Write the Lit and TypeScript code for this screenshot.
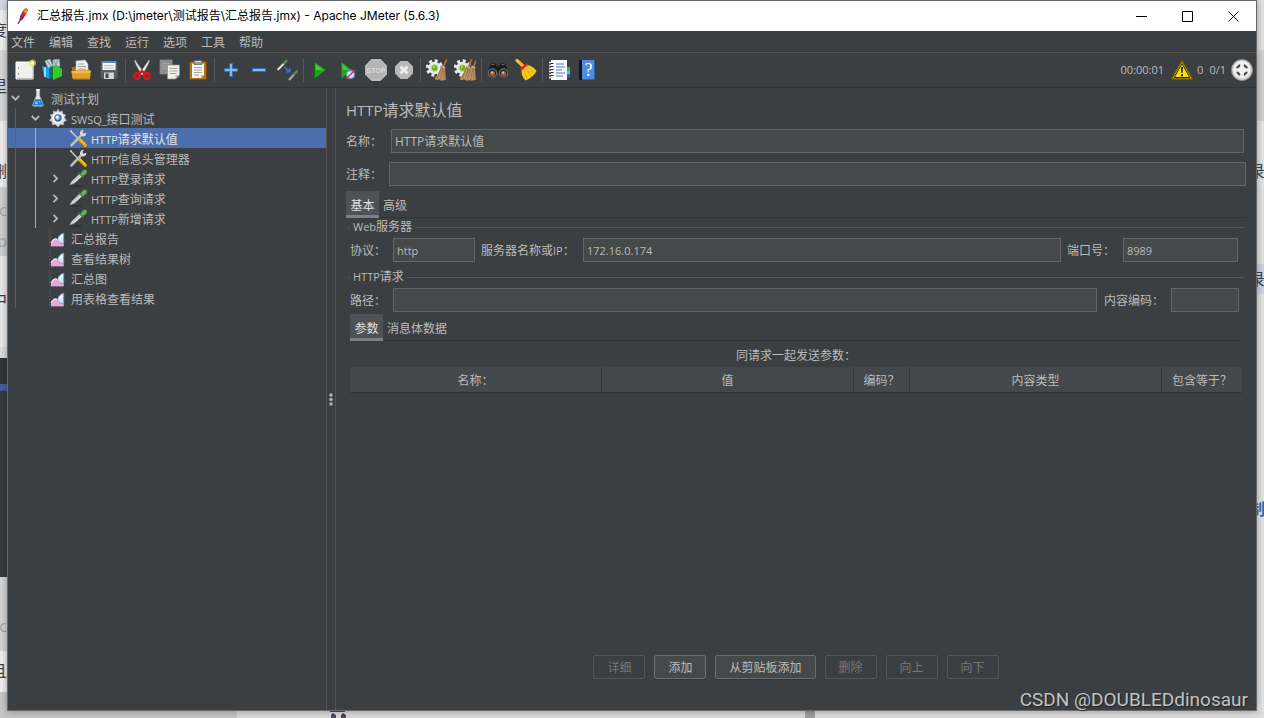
import { LitElement, html, css, svg, nothing } from "lit";
import { customElement, property, state } from "lit/decorators.js";
import { classMap } from "lit/directives/class-map.js";

const CJK = css`"Open Sans", "Noto Sans", "Noto Sans CJK SC", sans-serif`;

const STAR = "M11 0l2 3.400 3.600-1.300.4 3.800 3.600 1.200-1.700 3.400L21.500 14l-3.300 1.700-.2 3.900-3.800-.6L11 22l-3.200-3-3.800.6-.2-3.900L.5 14l2.600-3.500L1.400 7.100 5 5.900l.4-3.800L9 3.400z";

/* A document sheet that the copy icon draws twice. */
const sheet = (x: number, y: number, fill: string) => svg`
  <path d="M${x} ${y}h12v10l-4 4h-8z" fill=${fill} stroke="#8d8d8d" stroke-width=".7"/>
  <path d="M${x + 12} ${y + 10}h-4v4z" fill="#bdbdb8"/>
  <path d="M${x + 2} ${y + 3.5}h8M${x + 2} ${y + 6}h8M${x + 2} ${y + 8.5}h7" stroke="#a4a4a0" stroke-width="1"/>`;

const broom = (dx: number) => svg`
  <g transform="translate(${dx} 0)">
    <path d="M20 0l1.500.5-3.500 8-1.500-.8z" fill="#a8703c"/>
    <path d="M15.500 7l3.500 1.500.8 12.500-4.800.8-2-1.800-1.500 1.300-3-1.300c3-4 5-8 7-13z" fill="#bd9468"/>
    <path d="M15.500 8.500L11 20M17 9l-2.500 12M18 9v12" stroke="#8d6540" stroke-width=".7" fill="none"/>
    <path d="M15.500 7l3.800 1.800" stroke="#d8b78a" stroke-width="1.200"/>
  </g>`;

const gearWhite = svg`
  <circle cx="8.500" cy="9" r="6.200" fill="#ececec"/>
  <circle cx="8.500" cy="9" r="7.200" fill="none" stroke="#ececec" stroke-width="3" stroke-dasharray="3 2.650"/>
  <circle cx="8.500" cy="9" r="4" fill="#c9d6b8"/>
  <circle cx="8.500" cy="9" r="2.800" fill="#63b315"/>
  <circle cx="7.800" cy="8.200" r="1" fill="#b6e878"/>`;

const ICONS: Record<string, unknown> = {
  feather: svg`
    <path d="M16.500 1.500c2.500 1 1.500 4-1 8-1.500 2.500-4 6-6 7.500l-1.500-1c.5-3.500 2-8 4-11 1.500-2.300 3-3.800 4.500-3.500z" fill="#c4243c"/>
    <path d="M16.500 1.500c2.500 1 1.500 4 0 6.500l-4-1.500c1-2.500 2.500-5 4-5z" fill="#f08a24"/>
    <path d="M9.500 10l4 2.200c-1.200 2-2.800 4-4 4.800l-1.500-1c.2-2 .7-4 1.500-6z" fill="#8d2464"/>
    <path d="M8.500 16.500L6 20.500" stroke="#5a2050" stroke-width="1.500"/>`,
  newfile: svg`
    <path d="M2 3h17v17H2z" fill="#f0f0ee" stroke="#fff" stroke-width="1"/>
    <path d="M3 19.500h16M19 6v14" stroke="#bcbcba" stroke-width="1"/>
    <path d="M4 9h1M4 15h1" stroke="#8a8a8a" stroke-width="1.500"/>
    <circle cx="18.500" cy="4" r="3.500" fill="#e8d860" opacity=".75"/>
    <circle cx="18.500" cy="4" r="1.800" fill="#fffbc4"/>`,
  templates: svg`
    <path d="M3 2l5-2 3 7-5 2zM11 1l6-1 1 7-7 2z" fill="#c4d4da" stroke="#8fa0a6" stroke-width=".8"/>
    <path d="M5 2l4 5M12 2l3 5M16 1l-3 6" stroke="#78909c" stroke-width="1"/>
    <path d="M0 7l7 2v11l-5-3z" fill="#18a5e0"/>
    <path d="M2 8l2 .6v10l-2-1z" fill="#8bdcff"/>
    <path d="M7 9l4-2v11l-4 2z" fill="#0b6ea8"/>
    <path d="M9 8l4-1 7 5-7 9-4-2z" fill="#167a12"/>
    <path d="M11 7l3-1 6 4v7l-9 4z" fill="#35c92b"/>`,
  open: svg`
    <path d="M2 8h6l2 2h9v9H2z" fill="#a8730a"/>
    <path d="M6 2l9-1 3 4v9H6z" fill="#f1f1ef" stroke="#b4b4b4" stroke-width=".6"/>
    <path d="M8 5h6M8 7.500h8M8 10h8" stroke="#9b9b9b" stroke-width="1"/>
    <path d="M1 12h4l2-1h13l1 1-1 8H3z" fill="#e0a02a"/>
    <path d="M2 13h18" stroke="#ffdb7c" stroke-width="1"/>
    <path d="M3 20h17" stroke="#b87c10" stroke-width="1.200"/>`,
  save: svg`
    <path d="M2 2h18v18H3l-1-1z" fill="#5b5b5b" stroke="#3a3a3a" stroke-width="1"/>
    <path d="M4.500 2h13v9h-13z" fill="#f6f8fb"/>
    <path d="M4.500 2h13v2h-13z" fill="#5b88c4"/>
    <path d="M6 6.500h10M6 9h10" stroke="#b2bac4" stroke-width="1"/>
    <path d="M6 13.500h10V20H6z" fill="#d3d3d3"/>
    <path d="M7.500 14.500h3V19h-3z" fill="#444"/>`,
  cut: svg`
    <path d="M4 1l9 13-2 2C8 11 5 6 3.500 2z" fill="#e6e6e6" stroke="#9a9a9a" stroke-width=".5"/>
    <path d="M18 1L9 14l2 2c3-5 6-10 7.500-14z" fill="#f4f4f4" stroke="#9a9a9a" stroke-width=".5"/>
    <ellipse cx="6" cy="17" rx="2.800" ry="3" fill="none" stroke="#d81818" stroke-width="2.400"/>
    <ellipse cx="16" cy="17" rx="2.800" ry="3" fill="none" stroke="#d81818" stroke-width="2.400"/>
    <path d="M8 15l3-3 3 3" fill="none" stroke="#d81818" stroke-width="2.400"/>`,
  copy: svg`${sheet(1, 1, "#8e8e8b")}${sheet(8.5, 6, "#f1f1ec")}`,
  paste: svg`
    <rect x="2.500" y="2.500" width="17" height="18" rx="1.500" fill="#b9701b" stroke="#7d460b" stroke-width="1"/>
    <path d="M5 4.500h12v11.500l-3 3H5z" fill="#f5f5f2"/>
    <path d="M17 16h-3v3z" fill="#c2c2bd"/>
    <path d="M7 8.500h8M7 11h8M7 13.500h8M7 16h5" stroke="#a6a6a2" stroke-width="1"/>
    <path d="M7 1.500h8v4H7z" fill="#9a9a96" stroke="#5f5f5c" stroke-width=".7"/>
    <path d="M8 2.500h6" stroke="#ddd" stroke-width="1"/>`,
  plus: svg`<path d="M9.500 4.500h3v5h5v3h-5v5h-3v-5h-5v-3h5z" fill="#8ab4ea" stroke="#2f6cbb" stroke-width="1"/>`,
  minus: svg`<path d="M4.500 9.500h13v3h-13z" fill="#8ab4ea" stroke="#2f6cbb" stroke-width="1"/>`,
  toggle: svg`
    <path d="M1.500 11L8 4.500" stroke="#d8dcd6" stroke-width="2.200"/>
    <path d="M7.500 5l3.500-4" stroke="#5d8a52" stroke-width="2.400"/>
    <path d="M13 21l5-5.500" stroke="#a3a89f" stroke-width="2.400"/>
    <path d="M17.500 16l4-4.500" stroke="#5d8a52" stroke-width="2.600"/>
    <path d="M8.500 8l5 4.500" stroke="#3877d8" stroke-width="1.400"/>
    <path d="M14.500 8.500v5h-5z" fill="#3877d8"/>`,
  run: svg`<path d="M5.500 3L16.500 11l-11 8.500z" fill="#23a31c"/><path d="M6.500 5l8 6h-8z" fill="#4cc63e"/><path d="M5.500 3v16.500" stroke="#0f6b0c" stroke-width="1"/>`,
  runnotimer: svg`
    <path d="M4.500 3L14.500 11l-10 8.500z" fill="#23a31c"/><path d="M5.500 5l7 6h-7z" fill="#4cc63e"/>
    <circle cx="13.500" cy="15.500" r="4" fill="#dce8f6" stroke="#5f8fcf" stroke-width="1.300"/>
    <path d="M9 20l9-9" stroke="#d6322c" stroke-width="1.400"/>`,
  stop: svg`
    <path d="M6.500 0h9L22 6.500v9L15.500 22h-9L0 15.500v-9z" fill="#b4b4b4"/>
    <path d="M7 1.200h8L20.800 7v8L15 20.800H7L1.200 15V7z" fill="none" stroke="#c2c2c2" stroke-width="1"/>
    <text x="11" y="14" text-anchor="middle" font-family="Liberation Sans, sans-serif" font-size="7" font-weight="bold" fill="#d8d8d8">STOP</text>`,
  shutdown: svg`
    <path d="M7.500 2h7L20 7.500v7L14.500 20h-7L2 14.500v-7z" fill="#b9b9b9"/>
    <path d="M7.500 7.500l7 7M14.500 7.500l-7 7" stroke="#ededed" stroke-width="3"/>`,
  clear: svg`${gearWhite}${broom(0)}`,
  clearall: svg`${gearWhite}${broom(-3)}${broom(2)}`,
  search: svg`
    <path d="M4 4.500h4.500l1.500 3h2l1.500-3H18l3.500 9-3 5h-4l-2-4h-3l-2 4h-4l-3-5z" fill="#191919"/>
    <path d="M4.500 5.500h3M14.500 5.500h3" stroke="#6b6b6b" stroke-width="1.200"/>
    <circle cx="5.500" cy="14" r="4.300" fill="#2b2b2b" stroke="#8a8a8a" stroke-width=".9"/>
    <circle cx="16.500" cy="14" r="4.300" fill="#2b2b2b" stroke="#8a8a8a" stroke-width=".9"/>
    <circle cx="5.500" cy="14.500" r="2.500" fill="#b0623a"/><circle cx="16.500" cy="14.500" r="2.500" fill="#b0623a"/>
    <circle cx="5" cy="13.500" r="1" fill="#f0c8a8"/><circle cx="16" cy="13.500" r="1" fill="#f0c8a8"/>`,
  clean: svg`
    <path d="M2 1.500L9 8" stroke="#f0c020" stroke-width="3.200" stroke-linecap="round"/>
    <path d="M6.500 9.500l5-4c5 1.500 8 3.500 10 6.500-2 4-6 7.500-11 9.500-3-3-4.500-7-4-12z" fill="#f2cb1d"/>
    <path d="M9 10l3 10M11 8.500l5.500 9M12 7l7.500 7" stroke="#d0a414" stroke-width=".8" fill="none"/>
    <path d="M6 10.500l6-5.500" stroke="#d4282c" stroke-width="2.600"/>`,
  functions: svg`
    <path d="M18 8h4v4h-4z" fill="#40a848"/><path d="M18 12h4v3h-4z" fill="#5cc4e8"/><path d="M18 15h4v4h-4z" fill="#2858c8"/>
    <path d="M3 1h16v20H3z" fill="#f8f8f8"/>
    <path d="M8 5h8M8 8h9M8 11h6M8 14h9M8 17h7" stroke="#4a7fc4" stroke-width="1"/>
    <path d="M1 3.500h4M1 6.500h4M1 9.500h4M1 12.500h4M1 15.500h4M1 18.500h4" stroke="#f2f2f2" stroke-width="1.600"/>
    <path d="M3 4.500h2.500M3 7.500h2.500M3 10.500h2.500M3 13.500h2.500M3 16.500h2.500" stroke="#222" stroke-width="1"/>`,
  help: svg`
    <path d="M3 1h3v20H3z" fill="#141414"/>
    <path d="M6 1h13v20H6z" fill="#4f8be0"/>
    <path d="M18.500 1v20M6 20.500h13" stroke="#2c5ea8" stroke-width="1"/>
    <text x="12.500" y="17" text-anchor="middle" font-family="Liberation Serif, serif" font-size="18" fill="#fff">?</text>`,
  warning: svg`
    <path d="M11 1.500L21.500 20H.5z" fill="#f7d200" stroke="#6d5b08" stroke-width="1.400" stroke-linejoin="round"/>
    <path d="M11 4.500L18.800 18.500H3.200z" fill="#ffdf10" stroke="#2b2708" stroke-width="1" stroke-linejoin="round"/>
    <path d="M10 8h2l-.4 6h-1.200zM10 15.300h2v2h-2z" fill="#1a1a1a"/>`,
  remote: svg`
    <circle cx="11" cy="11" r="10.500" fill="#d4d4d4" stroke="#8f8f8f" stroke-width="1"/>
    <circle cx="11" cy="10.500" r="8.500" fill="#f0f0f0"/>
    <circle cx="11" cy="11" r="5" fill="none" stroke="#4a4a4a" stroke-width="2.400"/>
    <path d="M11 3.500v15M3.500 11h15" stroke="#f0f0f0" stroke-width="3.600"/>`,
  flask: svg`
    <path d="M9 1h4v7l4.500 11c.4 1.500-.2 2-1.500 2H6c-1.300 0-1.900-.5-1.500-2L9 8z" fill="#dfe6ec" stroke="#a2acb4" stroke-width=".7"/>
    <path d="M7.500 12.500h7l2.500 6c.3 1.300 0 1.700-1 1.700H6c-1 0-1.300-.4-1-1.700z" fill="#1e7fd8"/>
    <circle cx="9" cy="17" r="1.600" fill="#8fd0ff"/><circle cx="13" cy="15.500" r="1" fill="#8fd0ff"/>
    <path d="M8.500 1h5" stroke="#fff" stroke-width="1.600"/>`,
  gear: svg`
    <path d=${STAR} fill="#d9dde2" stroke="#8a9098" stroke-width=".6"/>
    <circle cx="11" cy="11" r="6.800" fill="#f3f5f8"/>
    <circle cx="11" cy="11" r="4.500" fill="#3a6398"/>
    <circle cx="10.500" cy="10.500" r="2.800" fill="#9cc4ee"/><circle cx="10" cy="10" r="1.400" fill="#fff"/>`,
  tools: svg`
    <path d="M2 2.500l9 9" stroke="#c9c9c9" stroke-width="1.800"/>
    <path d="M1 1l3 1.500-1.500 1.500z" fill="#e8e8e8"/>
    <path d="M12 12l8 8" stroke="#e8a80c" stroke-width="4" stroke-linecap="round"/>
    <path d="M13 11.500l7 7" stroke="#ffd648" stroke-width="1.200"/>
    <path d="M3 20l12-12.500" stroke="#bcc0c2" stroke-width="3" stroke-linecap="round"/>
    <path d="M13.500 6.500c-.5-3 1.500-5.500 4.500-5.500l-1.500 3 1.500 1.800 3.200-1.300c.3 3-2.200 5-5.200 4.500z" fill="#dadcdd"/>`,
  dropper: svg`
    <path d="M2 21h13" stroke="#262829" stroke-width="1.200"/>
    <path d="M1 19.500l2.500-4.500L13 6l3 3-9.500 8.500z" fill="#e6e9e6" stroke="#8a8d8a" stroke-width=".8"/>
    <path d="M4.500 16.500l8.500-8" stroke="#a5aaa5" stroke-width="1.200"/>
    <path d="M12 4.500l5.500 5.500" stroke="#3f7d35" stroke-width="2"/>
    <path d="M14 6L17 2c1.500-1.700 5-1.200 5 1.300 0 1-.5 1.700-1.300 2.500l-4 3z" fill="#68ad55" stroke="#4f9342" stroke-width=".8"/>`,
  report: svg`
    <path d="M1 1v20.500h18" stroke="#6c6c6c" stroke-width="1" fill="none" stroke-dasharray="2 1.500"/>
    <path d="M2.500 21v-4c2-3.500 4-5.500 6-5 2 .3 2.500 3 4.500 4l5 1v4z" fill="#f0a4dc"/>
    <path d="M2.500 17c2-3.500 4-5.500 6-5 2 .3 2.500 3 4.500 4" stroke="#fde4f6" stroke-width="1.400" fill="none"/>
    <path d="M10.500 12.500c1-4 4.500-7 7.500-7.500v13l-4.500-1.200c-2-.8-3.200-2.500-3-4.300z" fill="#d3e6fb" stroke="#5b8ed6" stroke-width=".9"/>
    <path d="M13.500 12c.5-1.500 1.500-3 3-3.800" stroke="#fff" stroke-width="1.800" fill="none"/>`,
};

const icon = (name: string, size = 22) =>
  html`<svg width=${size} height=${size} viewBox="0 0 22 22" fill="none" aria-hidden="true">${ICONS[name]}</svg>`;

/* Latin runs get their own class, since they are sized apart from the ideographs beside them. */
const mixed = (text: string) =>
  text
    .split(/([\x20-\x7e]+)/)
    .filter(Boolean)
    .map((run) => (/^[\x20-\x7e]/.test(run) ? html`<span class="latin">${run}</span>` : run));

interface TreeNode {
  label: string;
  icon: string;
  level: number;
  open?: boolean;
}

const TREE: TreeNode[] = [
  { label: "测试计划", icon: "flask", level: 0, open: true },
  { label: "SWSQ_接口测试", icon: "gear", level: 1, open: true },
  { label: "HTTP请求默认值", icon: "tools", level: 2 },
  { label: "HTTP信息头管理器", icon: "tools", level: 2 },
  { label: "HTTP登录请求", icon: "dropper", level: 2, open: false },
  { label: "HTTP查询请求", icon: "dropper", level: 2, open: false },
  { label: "HTTP新增请求", icon: "dropper", level: 2, open: false },
  { label: "汇总报告", icon: "report", level: 1 },
  { label: "查看结果树", icon: "report", level: 1 },
  { label: "汇总图", icon: "report", level: 1 },
  { label: "用表格查看结果", icon: "report", level: 1 },
];

const TOOLS: [string, string][][] = [
  [["newfile", "新建"], ["templates", "模板"], ["open", "打开"], ["save", "保存"]],
  [["cut", "剪切"], ["copy", "复制"], ["paste", "粘贴"]],
  [["plus", "全部展开"], ["minus", "全部折叠"], ["toggle", "切换"]],
  [["run", "启动"], ["runnotimer", "不停顿开始"], ["stop", "停止"], ["shutdown", "关闭"]],
  [["clear", "清除"], ["clearall", "清除全部"]],
  [["search", "查找"], ["clean", "重置搜索"]],
  [["functions", "函数助手"], ["help", "帮助"]],
];

const base = css`
  * { box-sizing: border-box; }
  button, input { font: inherit; color: inherit; margin: 0; }
  button { background: none; border: 0; padding: 0; }
  svg { display: block; flex: none; }
  .latin { font-size: 11px; }
`;

@customElement("jm-toolbar")
class JmToolbar extends LitElement {
  static styles = [base, css`
    :host { display: flex; align-items: center; height: 35px; padding: 0 3px; border-bottom: 1px solid #323537; }
    .group { display: flex; }
    .group + .group { margin-left: 2px; border-left: 1px solid #555759; padding-left: 2px; }
    .tool { width: 28px; height: 24px; display: flex; align-items: center; justify-content: center; }
    .status { margin-left: auto; display: flex; align-items: center; font-size: 11px; }
    .time { margin-right: 7px; }
    .errors { margin: 0 6px 0 4px; }
    .threads { margin-right: 5px; }
  `];
  render() {
    return html`
      ${TOOLS.map((g) => html`<div class="group">
        ${g.map(([name, title]) => html`<button class="tool" aria-label=${title} ?disabled=${name === "stop" || name === "shutdown"}>${icon(name)}</button>`)}
      </div>`)}
      <div class="status">
        <span class="time">00:00:01</span>
        <button aria-label="日志">${icon("warning")}</button>
        <span class="errors">0</span>
        <span class="threads">0/1</span>
        ${icon("remote")}
      </div>`;
  }
}

@customElement("jm-tree")
class JmTree extends LitElement {
  @state() private selected = 2;
  static styles = [base, css`
    :host { display: block; border-right: 1px solid #55524f; }
    .row { display: flex; align-items: center; width: 100%; height: 20px; padding-left: 3px; text-align: left; white-space: nowrap; }
    .row.selected { background: #4b6eaf; color: #e4e4e4; }
    .guide { width: 20px; height: 20px; flex: none; padding-left: 4px; }
    .guide::before { content: ""; display: block; height: 20px; border-left: 1px solid #5e6163; }
    .guide.active::before { border-color: #7db8f0; }
    .arrow { width: 17px; flex: none; }
    .pic { width: 20px; flex: none; display: flex; justify-content: center; margin-right: 3px; }
    .text { padding-top: 3px; }
  `];
  render() {
    return html`<div role="tree" aria-label="测试计划">
      ${TREE.map((n, i) => html`
        <button role="treeitem" class=${classMap({ row: true, selected: i === this.selected })}
          aria-selected=${i === this.selected} @click=${() => (this.selected = i)}>
          ${Array.from({ length: n.level }, (_, d) => html`<span class=${classMap({ guide: true, active: d === 1 })}></span>`)}
          <span class="arrow">${n.open === undefined ? nothing : html`
            <svg width="9" height="9" viewBox="0 0 9 9" fill="none" stroke="#b4b6b8" stroke-width="1.800">
              <path d=${n.open ? "M.8 2l3.700 3.700L8.200 2" : "M2.500.8l3.700 3.700-3.700 3.700"}/>
            </svg>`}</span>
          <span class="pic">${icon(n.icon, 18)}</span>
          <span class="text">${mixed(n.label)}</span>
        </button>`)}
    </div>`;
  }
}

@customElement("jm-tabs")
class JmTabs extends LitElement {
  @property({ attribute: false }) tabs: string[] = [];
  @state() private current = 0;
  static styles = [base, css`
    :host { display: flex; height: 27px; border-bottom: 1px solid #333638; }
    .tab { height: 27px; padding: 5px 4px 0; border-bottom: 3px solid transparent; line-height: 18px; }
    .tab.current { width: 33px; background: #4e5254; border-color: #7b7f86; color: #e0e0e0; }
  `];
  render() {
    return this.tabs.map((t, i) => html`<button role="tab" aria-selected=${i === this.current}
      class=${classMap({ tab: true, current: i === this.current })} @click=${() => (this.current = i)}>${t}</button>`);
  }
}

@customElement("jm-defaults-panel")
class JmDefaultsPanel extends LitElement {
  static styles = [base, css`
    :host { display: flex; flex-direction: column; padding: 10px 10px 31px; border-left: 1px solid #55524f; min-width: 0; }
    h1 { height: 24px; margin: 0 0 7px; font-size: 16px; font-weight: 400; line-height: 24px; }
    h1 .latin { font-size: 15px; }
    .line { display: flex; align-items: center; height: 24px; }
    .line + .line { margin-top: 9px; }
    .name { padding-right: 2px; }
    label { flex: none; white-space: nowrap; padding-top: 2px; }
    .w-name { width: 45px; }
    .w-short { width: 43px; }
    .w-host { width: 108px; padding-left: 6px; }
    .w-port { width: 62px; padding-left: 6px; }
    .w-enc { width: 74px; padding-left: 7px; }
    input { height: 24px; min-width: 0; padding: 0 3px; background: #45494a; border: 1px solid #646666; border-radius: 0; outline: none; }
    .plain { font-size: 11px; }
    .grow { flex: 1; }
    .in-protocol { width: 82px; }
    .in-port { width: 115px; }
    .in-enc { width: 68px; }
    .top-tabs { margin-top: 5px; }
    fieldset { margin: 0 2px; padding: 2px 2px 0; border: 0; border-top: 1px solid #555759; min-width: 0; }
    .server { padding-bottom: 6px; }
    .request { padding-bottom: 2px; }
    legend { padding: 0 3px; height: 18px; line-height: 18px; }
    .server .line { margin-right: 4px; }
    .request .line { margin-right: 3px; }
    .params { flex: 1; display: flex; flex-direction: column; padding: 0 4px; }
    table { width: 100%; margin-top: 5px; border-collapse: separate; border-spacing: 0; table-layout: fixed; }
    caption { height: 21px; line-height: 20px; }
    th { height: 26px; padding: 3px 0 0; font-weight: 400; background: #45484a; border-bottom: 1px solid #323537; border-right: 1px solid #323537; }
    th:last-child { border-right: 0; }
    .c-enc { width: 56px; }
    .c-eq { width: 80px; }
    .actions { margin-top: auto; display: flex; justify-content: center; gap: 9px; }
    .action { height: 24px; padding: 2px 13px 0; background: #45494a; border: 1px solid #6b6e70; border-radius: 2px; box-shadow: 0 1px 0 #333638; white-space: nowrap; line-height: 20px; }
    .action:disabled { background: none; border-color: #525557; box-shadow: none; color: #777; }
  `];
  render() {
    const actions: [string, boolean][] = [["详细", false], ["添加", true], ["从剪贴板添加", true], ["删除", false], ["向上", false], ["向下", false]];
    return html`
      <h1>${mixed("HTTP请求默认值")}</h1>
      <div class="line name"><label class="w-name" for="name">名称：</label><input class="grow" id="name" value="HTTP请求默认值"></div>
      <div class="line"><label class="w-short" for="note">注释：</label><input class="grow" id="note"></div>
      <jm-tabs class="top-tabs" role="tablist" .tabs=${["基本", "高级"]}></jm-tabs>
      <fieldset class="server">
        <legend>${mixed("Web服务器")}</legend>
        <div class="line">
          <label class="w-short" for="protocol">协议：</label><input class="plain in-protocol" id="protocol" value="http">
          <label class="w-host" for="host">${mixed("服务器名称或IP：")}</label><input class="plain grow" id="host" value="172.16.0.174">
          <label class="w-port" for="port">端口号：</label><input class="plain in-port" id="port" value="8989">
        </div>
      </fieldset>
      <fieldset class="request">
        <legend>${mixed("HTTP请求")}</legend>
        <div class="line">
          <label class="w-short" for="path">路径：</label><input class="grow" id="path">
          <label class="w-enc" for="encoding">内容编码：</label><input class="in-enc" id="encoding">
        </div>
      </fieldset>
      <div class="params">
        <jm-tabs role="tablist" .tabs=${["参数", "消息体数据"]}></jm-tabs>
        <table>
          <caption>同请求一起发送参数：</caption>
          <thead><tr><th>名称：</th><th>值</th><th class="c-enc">编码？</th><th>内容类型</th><th class="c-eq">包含等于？</th></tr></thead>
        </table>
        <div class="actions">${actions.map(([t, on]) => html`<button class="action" ?disabled=${!on}>${t}</button>`)}</div>
      </div>`;
  }
}

@customElement("app-root")
class AppRoot extends LitElement {
  static styles = [base, css`
    :host { display: block; box-sizing: border-box; position: relative; height: 100vh; padding: 0 7px 7px; overflow: hidden; background: #dcdcdc; color: #bbbbbb; font: 12px/18px ${CJK}; }
    .edge { position: absolute; top: 0; bottom: 0; width: 7px; overflow: hidden; font-size: 16px; line-height: 20px; color: #3a3f4a; }
    .left { left: 0; background: linear-gradient(#d5d9e2 0 10px, #efefef 10px 50px, #d8d8d8 50px 121px, #eeeeee 121px 187px, #cfcfcf 187px 256px, #e9e9e9 256px 347px, #dddddd 347px 358px, #333537 358px 384px, #3f5f9c 384px 391px, #36383a 391px 577px, #d4d4d4 577px 651px, #efefef 651px 692px, #c8c8c8 692px); }
    .right { right: 0; background: linear-gradient(#e2e2e2 0 50px, #d0d0d0 50px 121px, #e4e4e4 121px 188px, #e0e0e0 188px 264px, #cdd3df 264px 294px, #e2e2e2 294px); }
    .bit { position: absolute; right: 0; }
    .right .bit { right: auto; left: -8px; }
    .blue { color: #1e6fb8; font-weight: 700; }
    .faint { color: #a4a4a4; }
    .under { position: absolute; left: 0; right: 0; bottom: 0; height: 7px; background: linear-gradient(90deg, #c4c4c4 0 237px, #d8d8d8 237px 805px, #9c9c9c 805px 815px, #dcdcdc 815px); }
    .pins { position: absolute; left: 330px; bottom: 0; }
    .window { position: relative; height: 100%; display: flex; flex-direction: column; background: #3c3f41; border: 1px solid #696969; box-shadow: 0 0 7px rgba(0, 0, 0, .35); }
    .titlebar { display: flex; align-items: center; height: 30px; flex: none; background: #fff; color: #000; padding-left: 5px; }
    .title { flex: 1; margin-left: 6px; white-space: nowrap; }
    .title .latin { font-family: Inter, sans-serif; font-size: 12px; }
    .ctl { width: 46px; height: 30px; display: flex; align-items: center; justify-content: center; }
    .menu { display: flex; align-items: center; flex: none; gap: 14px; height: 22px; padding: 2px 3px 0; border-bottom: 1px solid #55524f; }
    .toolbar { flex: none; }
    .body { flex: 1; min-height: 0; display: flex; }
    .tree { width: 319px; flex: none; }
    .divider { width: 8px; flex: none; display: flex; align-items: center; justify-content: center; }
    .panel { flex: 1; }
    .mark { position: absolute; right: 8px; bottom: -2px; font: 19px/24px Roboto, "Liberation Sans", sans-serif; color: #c0c2c3; text-shadow: 1px 1px 1px #202224; white-space: nowrap; }
  `];
  render() {
    const bits: [string, number, string][] = [["度", 20, ""], ["里", 76, ""], ["删", 161, ""], ["c", 200, "faint"], ["p", 231, "faint"], ["中", 290, ""], ["c", 616, "faint"], ["且", 661, ""]];
    const rightBits: [string, number, string][] = [["录", 161, ""], ["录", 269, ""], ["制", 499, "blue"]];
    const draw = (list: [string, number, string][]) => list.map(([t, y, c]) => html`<span class="bit ${c}" style="top:${y}px">${t}</span>`);
    return html`
      <div class="edge left" aria-hidden="true">${draw(bits)}</div>
      <div class="edge right" aria-hidden="true">${draw(rightBits)}</div>
      <div class="under"></div>
      <svg class="pins" width="17" height="7" viewBox="0 0 17 7" fill="#4a4658" aria-hidden="true"><path d="M0 0h15v1H0zM3 2l3 2v3H1V4zM13 2l3 2v3h-5V4z"/></svg>
      <div class="window">
        <header class="titlebar">
          ${icon("feather", 18)}
          <span class="title">${mixed("汇总报告.jmx (D:\\jmeter\\测试报告\\汇总报告.jmx) - Apache JMeter (5.6.3)")}</span>
          <button class="ctl" aria-label="最小化"><svg width="11" height="11" stroke="#000" shape-rendering="crispEdges"><path d="M0 5.500h11"/></svg></button>
          <button class="ctl" aria-label="最大化"><svg width="11" height="11" fill="none" stroke="#000"><path d="M.5.5h10v10H.5z"/></svg></button>
          <button class="ctl" aria-label="关闭"><svg width="11" height="11" stroke="#000"><path d="M.5.5l10 10M10.500.5l-10 10"/></svg></button>
        </header>
        <nav class="menu">${["文件", "编辑", "查找", "运行", "选项", "工具", "帮助"].map((m) => html`<button>${m}</button>`)}</nav>
        <jm-toolbar class="toolbar"></jm-toolbar>
        <main class="body">
          <jm-tree class="tree"></jm-tree>
          <div class="divider"><svg width="4" height="13" fill="#b4b6b8"><circle cx="2" cy="2" r="1.700"/><circle cx="2" cy="6.500" r="1.700"/><circle cx="2" cy="11" r="1.700"/></svg></div>
          <jm-defaults-panel class="panel"></jm-defaults-panel>
        </main>
        <div class="mark">CSDN @DOUBLEDdinosaur</div>
      </div>`;
  }
}
